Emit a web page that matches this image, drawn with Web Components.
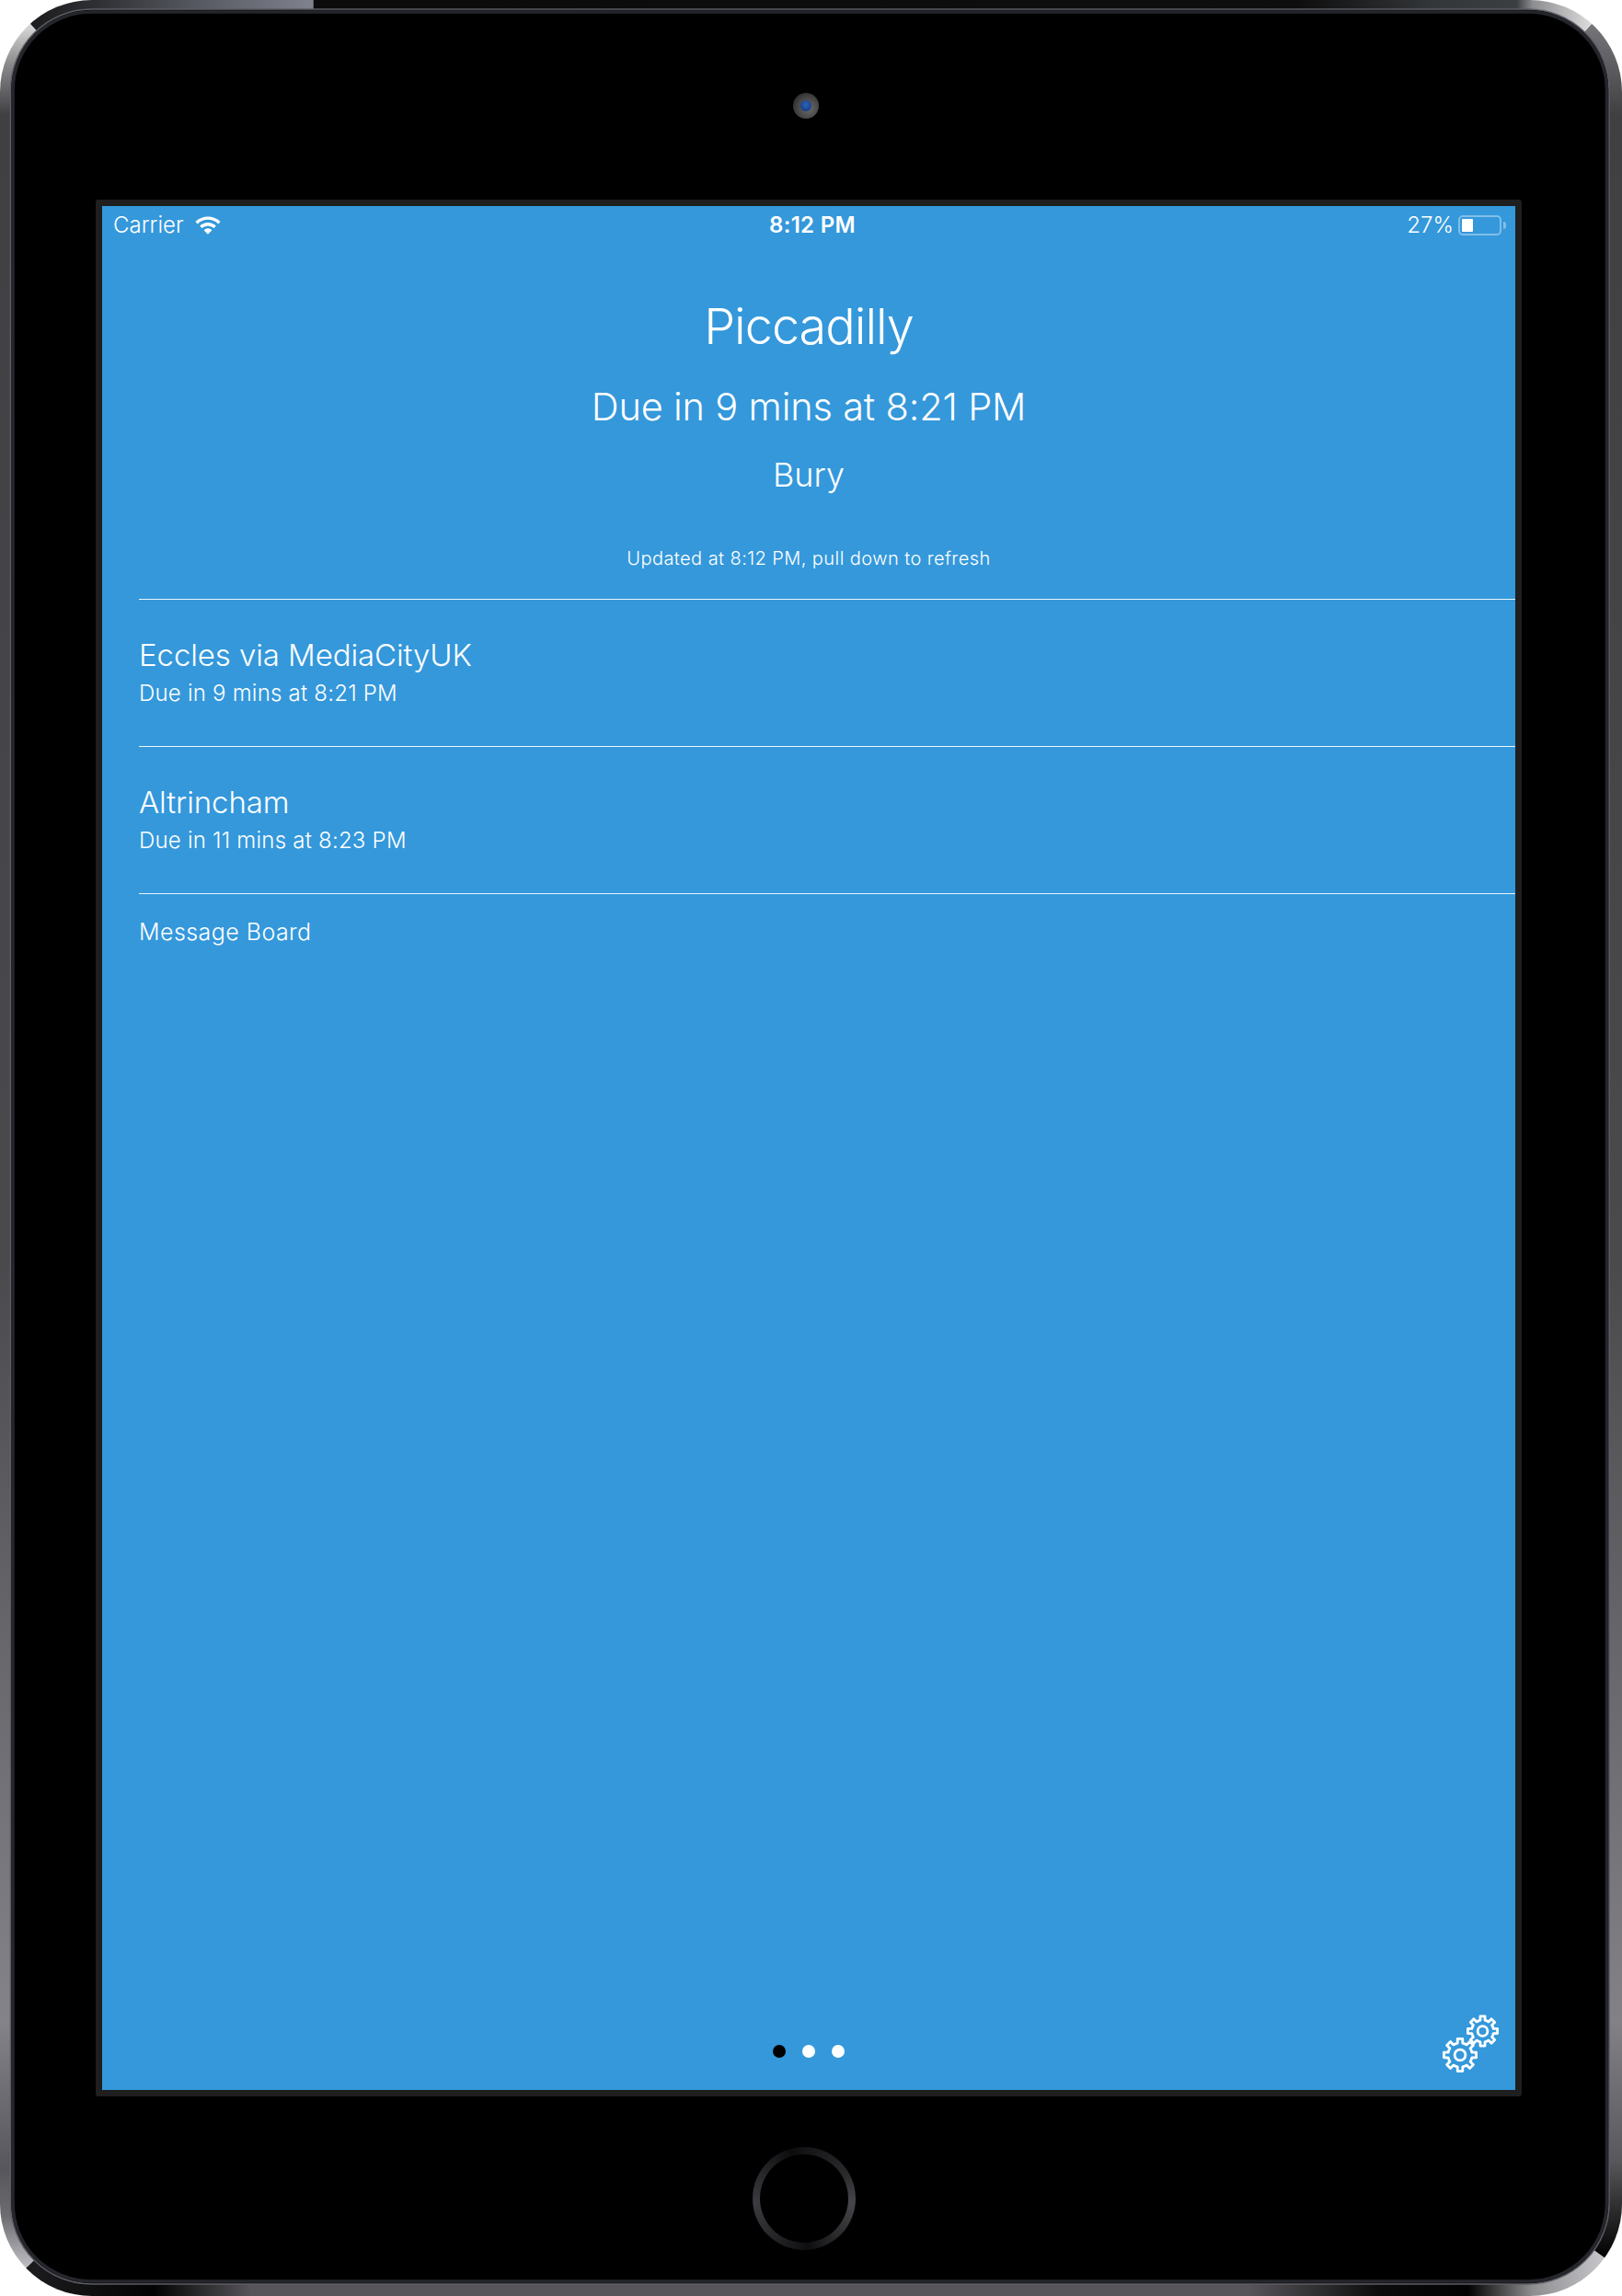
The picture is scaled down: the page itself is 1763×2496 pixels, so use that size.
<!DOCTYPE html>
<html lang="en">
<head>
<meta charset="utf-8">
<title>Piccadilly</title>
<style>
html,body{margin:0;padding:0;background:#fff}
body{font-family:Inter,"Liberation Sans",sans-serif;font-weight:350;color:#fff}
</style>
</head>
<body>
<ipad-device>
  <status-bar slot="screen" carrier="Carrier" time="8:12 PM" battery="27%"></status-bar>
  <stop-header slot="screen" stop="Piccadilly" due="Due in 9 mins at 8:21 PM" dest="Bury" updated="Updated at 8:12 PM, pull down to refresh"></stop-header>
  <tram-row slot="screen" dest="Eccles via MediaCityUK" due="Due in 9 mins at 8:21 PM"></tram-row>
  <tram-row slot="screen" dest="Altrincham" due="Due in 11 mins at 8:23 PM"></tram-row>
  <message-board slot="screen">Message Board</message-board>
  <page-dots slot="screen"></page-dots>
  <settings-gears slot="screen"></settings-gears>
</ipad-device>
<script>
function def(name, css, html){
  customElements.define(name, class extends HTMLElement{
    connectedCallback(){
      if(this.shadowRoot) return;
      const r=this.attachShadow({mode:'open'});
      const a=n=>this.getAttribute(n)||'';
      r.innerHTML='<style>'+css+'</style>'+html(a);
    }
  });
}
def('ipad-device',`
  :host{display:block;position:relative;width:1763px;height:2496px;overflow:hidden}
  .frame{position:absolute;left:0;top:0}
  .wrap{position:relative;display:flex;flex-direction:column;height:100%;box-sizing:border-box;padding-top:101px}
  .cam{width:28px;height:28px;margin-left:862px;border-radius:50%;display:flex;align-items:center;justify-content:center;
       background:radial-gradient(circle at 60% 60%,#6a6a6a 0,#4a4a4a 45%,#1a1a1a 100%)}
  .cam i{display:block;width:12px;height:12px;border-radius:50%;background:radial-gradient(circle at 50% 40%,#2f62b8 0,#1d4796 60%,#12285a 100%)}
  .bezel{box-sizing:border-box;margin:88px 0 0 104px;width:1550px;height:2062px;border:7px solid #1f1f1f;border-radius:3px;background:#3498db;
       position:relative;display:flex}
  .screen{position:relative;display:flex;flex-direction:column;width:1536px;height:2048px;background:#3498db}
  .home{width:112px;height:112px;box-sizing:border-box;margin:55px 0 0 818px;border-radius:50%;padding:8px;
       background:conic-gradient(from 0deg,#141416 0deg,#2a2a2d 60deg,#47474b 95deg,#2a2a2d 140deg,#0e0e10 175deg,#242427 215deg,#3c3c40 265deg,#222225 310deg,#0c0c0e 345deg,#141416 360deg)}
  .home i{display:block;width:100%;height:100%;border-radius:50%;background:#000}
`,()=>`
<svg class="frame" width="1763" height="2496" viewBox="0 0 1763 2496" fill="none" aria-hidden="true">
  <defs>
    <clipPath id="o"><rect width="1763" height="2496" rx="100"/></clipPath>
    <linearGradient id="gl" gradientUnits="userSpaceOnUse" x1="0" y1="0" x2="0" y2="2496">
      <stop offset=".012" stop-color="#d4d4d4"/><stop offset=".028" stop-color="#8a8a8c"/><stop offset=".05" stop-color="#404043"/>
      <stop offset=".55" stop-color="#4a4a4d"/><stop offset=".88" stop-color="#85838a"/><stop offset=".945" stop-color="#56565c"/>
      <stop offset=".965" stop-color="#6c6c70"/><stop offset=".988" stop-color="#c0c0c4"/>
    </linearGradient>
    <linearGradient id="gt" gradientUnits="userSpaceOnUse" x1="0" y1="0" x2="1763" y2="0">
      <stop offset=".02" stop-color="#1c1c1e"/><stop offset=".06" stop-color="#2f3034"/><stop offset=".12" stop-color="#555860"/>
      <stop offset=".193" stop-color="#7f828d"/><stop offset=".1935" stop-color="#0b0b0b"/><stop offset=".8" stop-color="#0e0e0e"/>
      <stop offset=".885" stop-color="#34373a"/><stop offset=".935" stop-color="#3c3f42"/><stop offset=".945" stop-color="#8d8d90"/><stop offset=".982" stop-color="#dedede"/>
    </linearGradient>
    <linearGradient id="gb" gradientUnits="userSpaceOnUse" x1="0" y1="0" x2="1763" y2="0">
      <stop offset=".018" stop-color="#1c1c1e"/><stop offset=".095" stop-color="#030303"/><stop offset=".155" stop-color="#57555a"/>
      <stop offset=".77" stop-color="#57555a"/><stop offset=".85" stop-color="#0c0c0c"/><stop offset=".905" stop-color="#020202"/>
      <stop offset=".945" stop-color="#8e8e91"/><stop offset=".99" stop-color="#c8c8cc"/>
    </linearGradient>
    <linearGradient id="gr" gradientUnits="userSpaceOnUse" x1="0" y1="0" x2="0" y2="2496">
      <stop offset=".01" stop-color="#77777b"/><stop offset=".05" stop-color="#404043"/><stop offset=".55" stop-color="#4a4a4d"/>
      <stop offset=".88" stop-color="#838186"/><stop offset=".94" stop-color="#5a595d"/><stop offset=".982" stop-color="#040404"/>
    </linearGradient>
  </defs>
  <g clip-path="url(#o)" stroke-width="30">
    <path stroke="url(#gl)" d="M33 25.8A100 100 0 0 0 0 100V2396A100 100 0 0 0 28.3 2465.6"/>
    <path stroke="url(#gb)" d="M28.3 2465.6A100 100 0 0 0 100 2496H1663A100 100 0 0 0 1744.2 2454.4"/>
    <path stroke="url(#gr)" d="M1730 25.8A100 100 0 0 1 1763 100V2396A100 100 0 0 1 1744.2 2454.4"/>
    <path stroke="url(#gt)" d="M33 25.8A100 100 0 0 1 100 0H1663A100 100 0 0 1 1730 25.8"/>
  </g>
  <rect x="11.5" y="10" width="1737.5" height="2473" rx="88" fill="#000" stroke="#5d5d65" stroke-width="1.6"/>
  <rect x="14" y="13" width="1732.5" height="2467" rx="85" fill="#000" stroke="#24262c" stroke-width="3.6"/>
</svg>
<div class="wrap">
  <div class="cam"><i></i></div>
  <div class="bezel"><div class="screen"><slot name="screen"></slot></div></div>
  <div class="home"><i></i></div>
</div>`);
def('status-bar',`
  :host{display:grid;grid-template-columns:1fr auto 1fr;align-items:center;height:42px;padding:0 10px 0 12px;box-sizing:border-box;font-size:24px;line-height:42px;width:1536px}
  .l{display:flex;align-items:center;gap:12px}
  .t{font-weight:600;font-size:24px;letter-spacing:.3px;margin-left:6px}
  .r{display:flex;align-items:center;justify-content:flex-end;gap:5px}
  svg{display:block}
  .bat{display:flex;align-items:center;gap:2px}
  .case{box-sizing:border-box;width:47px;height:22px;border:2px solid rgba(255,255,255,.38);border-radius:5px;padding:2px}
  .case i{display:block;width:12px;height:14px;background:#fff;border-radius:1px}
  .nub{width:3px;height:8px;background:rgba(255,255,255,.38);border-radius:0 3px 3px 0}
`,a=>`
<div class="l"><span>${a('carrier')}</span>
<svg width="28" height="20" viewBox="0 0 28 20" fill="none" stroke="#fff" stroke-width="3.4" aria-hidden="true">
  <path d="M1.6 7.2A17.8 17.8 0 0 1 26.4 7.2"/><path d="M6.3 11.8A11.2 11.2 0 0 1 21.7 11.8"/>
  <path d="M9.6 15.2L14 19.8L18.4 15.2A6.2 6.2 0 0 0 9.6 15.2Z" fill="#fff" stroke="none"/>
</svg></div>
<div class="t">${a('time')}</div>
<div class="r"><span>${a('battery')}</span><div class="bat"><div class="case"><i></i></div><div class="nub"></div></div></div>`);
def('stop-header',`
  :host{display:block;text-align:center;padding-top:58.5px}
  div{white-space:nowrap}
  .a{font-size:54px;line-height:60px;letter-spacing:-1px}
  .b{font-size:41.5px;line-height:50px;margin-top:32px;letter-spacing:-.17px}
  .c{font-size:36px;line-height:44px;margin-top:27px}
  .d{font-size:20px;line-height:26px;margin-top:56px;letter-spacing:.43px}
`,a=>`<div class="a">${a('stop')}</div><div class="b">${a('due')}</div><div class="c">${a('dest')}</div><div class="d">${a('updated')}</div>`);
def('tram-row',`
  :host{display:block;box-sizing:border-box;height:160px;margin-left:40px;padding-top:39px;border-top:1px solid rgba(255,255,255,.9)}
  :host(:first-of-type){margin-top:31px}
  .a{font-size:33px;line-height:42px;letter-spacing:-.1px}
  .b{font-size:24px;line-height:32px;margin-top:5px;letter-spacing:.22px}
`,a=>`<div class="a">${a('dest')}</div><div class="b">${a('due')}</div>`);
def('message-board',`
  :host{display:block;flex:1;box-sizing:border-box;margin-left:40px;padding-top:25px;border-top:1px solid rgba(255,255,255,.9);font-size:25px;line-height:32px;letter-spacing:.45px}
`,()=>`<slot></slot>`);
def('page-dots',`
  :host{display:flex;justify-content:center;gap:18px;padding-bottom:35px}
  i{display:block;width:14px;height:14px;border-radius:50%;background:#fff}
  i:first-of-type{background:#000}
`,()=>`<i></i><i></i><i></i>`);
function cog(cx,cy,R,r,n){
  let d='';const st=2*Math.PI/n;
  for(let k=0;k<n;k++){
    const t=-Math.PI/2+k*st;
    const pts=[[r,-.5],[r,-.27],[R,-.2],[R,.2],[r,.27],[r,.5]];
    pts.forEach(([q,f],i)=>{
      const x=cx+q*Math.cos(t+f*st),y=cy+q*Math.sin(t+f*st);
      d+=((k===0&&i===0)?'M':'L')+x.toFixed(2)+' '+y.toFixed(2);
    });
  }
  return d+'Z';
}
def('settings-gears',`
  :host{display:block;position:absolute;right:12px;bottom:14px;width:68px;height:68px}
  svg{display:block}
`,()=>`<svg width="68" height="68" viewBox="0 0 68 68" fill="none" stroke="#fff" stroke-width="2.8" stroke-linejoin="round" aria-hidden="true">
  <path d="${cog(44.5,18,16.3,12,8)}"/><circle cx="44.5" cy="18" r="5.4"/>
  <path d="${cog(20,44,17.8,13.2,8)}"/><circle cx="20" cy="44" r="5.9"/>
</svg>`);
</script>
</body>
</html>
